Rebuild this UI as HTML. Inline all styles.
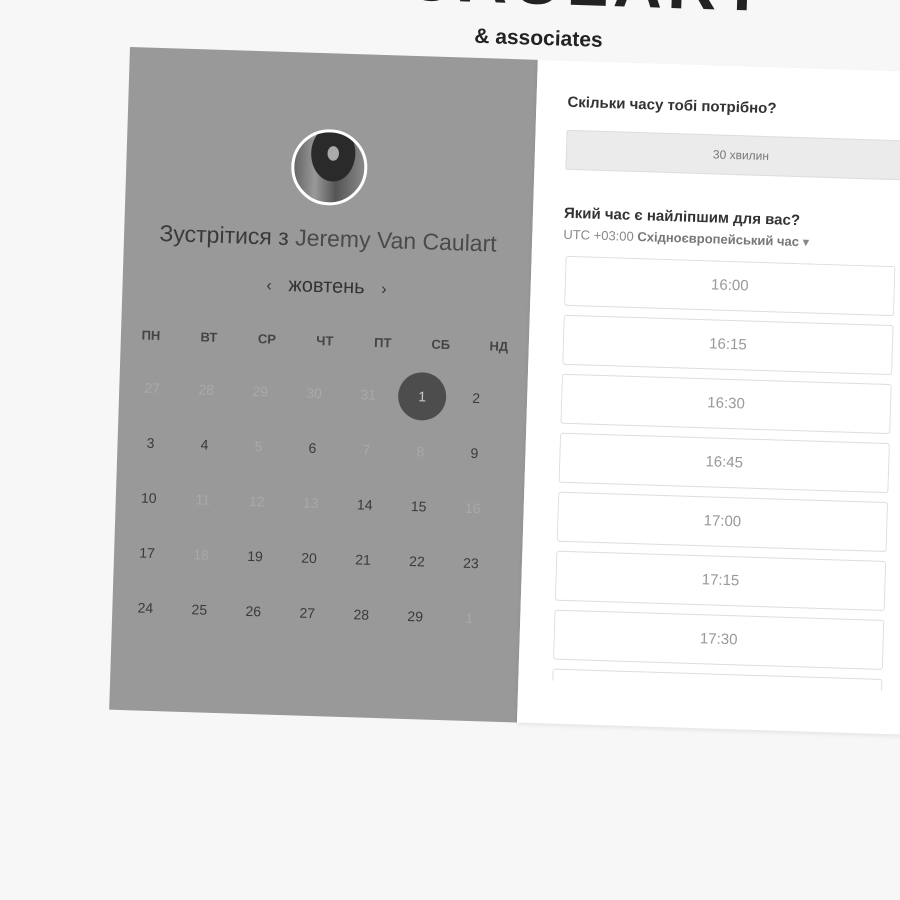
<!DOCTYPE html>
<html><head><meta charset="utf-8"><style>
html,body{margin:0;padding:0;width:900px;height:900px;overflow:hidden;background:#f7f7f7;font-family:"Liberation Sans",Arial,sans-serif;}
#w{position:absolute;left:130px;top:47px;width:900px;height:663px;transform:rotate(1.8deg);transform-origin:0 0;}
.big{position:absolute;left:95px;top:-118px;font-size:68px;font-weight:bold;letter-spacing:5px;color:#222;white-space:nowrap;}
.assoc{position:absolute;left:300px;top:-33px;width:216px;text-align:center;font-size:21px;font-weight:bold;color:#222;}
#left{position:absolute;left:0;top:0;width:408px;height:663px;background:#999;}
#right{position:absolute;left:408px;top:0;width:600px;height:663px;background:#fff;box-shadow:0 2px 4px rgba(0,0,0,.08);}
.av{position:absolute;left:165px;top:76px;width:70px;height:70px;border-radius:50%;border:3px solid #fff;background:radial-gradient(ellipse at 55% 30%,#aaa 0 10%,#2a2a2a 11% 40%,transparent 41%),linear-gradient(90deg,#666,#999 30%,#555 60%,#888);}
.title{position:absolute;left:0;width:408px;top:172px;text-align:center;font-size:23px;color:#3a3a3a;}
.title span{color:#4a4a4a}
.month{position:absolute;left:0;width:408px;top:222px;text-align:center;font-size:20px;color:#333;}
.hd,.d{position:absolute;width:40px;margin-left:-20px;text-align:center;}
.hd{font-size:13px;font-weight:bold;color:#444;top:280px;}
.d{font-size:14px;color:#3a3a3a;}
.d.x{color:#a9a9a9}
.sel{position:absolute;width:48px;height:48px;border-radius:50%;background:#4d4d4d;left:279px;top:316px;color:#ccc;text-align:center;line-height:48px;font-size:14px;}
.h1{position:absolute;left:31px;font-size:15px;font-weight:bold;color:#333;}
.dur{position:absolute;left:31px;top:69px;width:600px;height:38px;background:#ebebeb;border:1px solid #ddd;border-radius:2px;font-size:12px;color:#777;line-height:38px;}
.dur span{position:absolute;left:146px}
.utc{position:absolute;left:31px;top:166px;font-size:13px;color:#888;}
.utc b{color:#777}
.slots{position:absolute;left:34px;top:195px;width:330px;height:425px;overflow:hidden;}
.s{height:48px;border:1px solid #ddd;border-radius:3px;margin-bottom:9px;text-align:center;line-height:48px;font-size:15px;color:#999;}
</style></head><body>
<div id="w">
<div class="big">VAN CAULART</div>
<div class="assoc">&amp; associates</div>
<div id="left">
<div class="av"></div>
<div class="title">Зустрітися з <span>Jeremy Van Caulart</span></div>
<div class="month"><span style="font-size:16px">‹</span>&nbsp;&nbsp; жовтень &nbsp;&nbsp;<span style="font-size:16px">›</span></div>
<div class="hd" style="left:30px">ПН</div><div class="hd" style="left:88px">ВТ</div><div class="hd" style="left:146px">СР</div><div class="hd" style="left:204px">ЧТ</div><div class="hd" style="left:262px">ПТ</div><div class="hd" style="left:320px">СБ</div><div class="hd" style="left:378px">НД</div>
<div class="sel">1</div>
<div id="dates"></div>
</div>
<div id="right">
<div class="h1" style="top:33px">Скільки часу тобі потрібно?</div>
<div class="dur"><span>30 хвилин</span></div>
<div class="h1" style="top:144px">Який час є найліпшим для вас?</div>
<div class="utc">UTC +03:00 <b>Східноєвропейський час</b> ▾</div>
<div class="slots">
<div class="s">16:00</div><div class="s">16:15</div><div class="s">16:30</div><div class="s">16:45</div><div class="s">17:00</div><div class="s">17:15</div><div class="s">17:30</div><div class="s"></div>
</div>
</div>
</div>
<script>
var rows=[["27x","28x","29x","30x","31x","",  "2"],["3","4","5x","6","7x","8x","9"],["10","11x","12x","13x","14","15","16x"],["17","18x","19","20","21","22","23"],["24","25","26","27","28","29","1x"]];
var h="";rows.forEach(function(r,i){r.forEach(function(v,j){if(!v)return;var x=v.indexOf("x")>0;h+='<div class="d'+(x?' x':'')+'" style="left:'+(33+j*54)+'px;top:'+(332+i*55)+'px">'+v.replace("x","")+'</div>';});});
document.getElementById("dates").innerHTML=h;
</script>
</body></html>
